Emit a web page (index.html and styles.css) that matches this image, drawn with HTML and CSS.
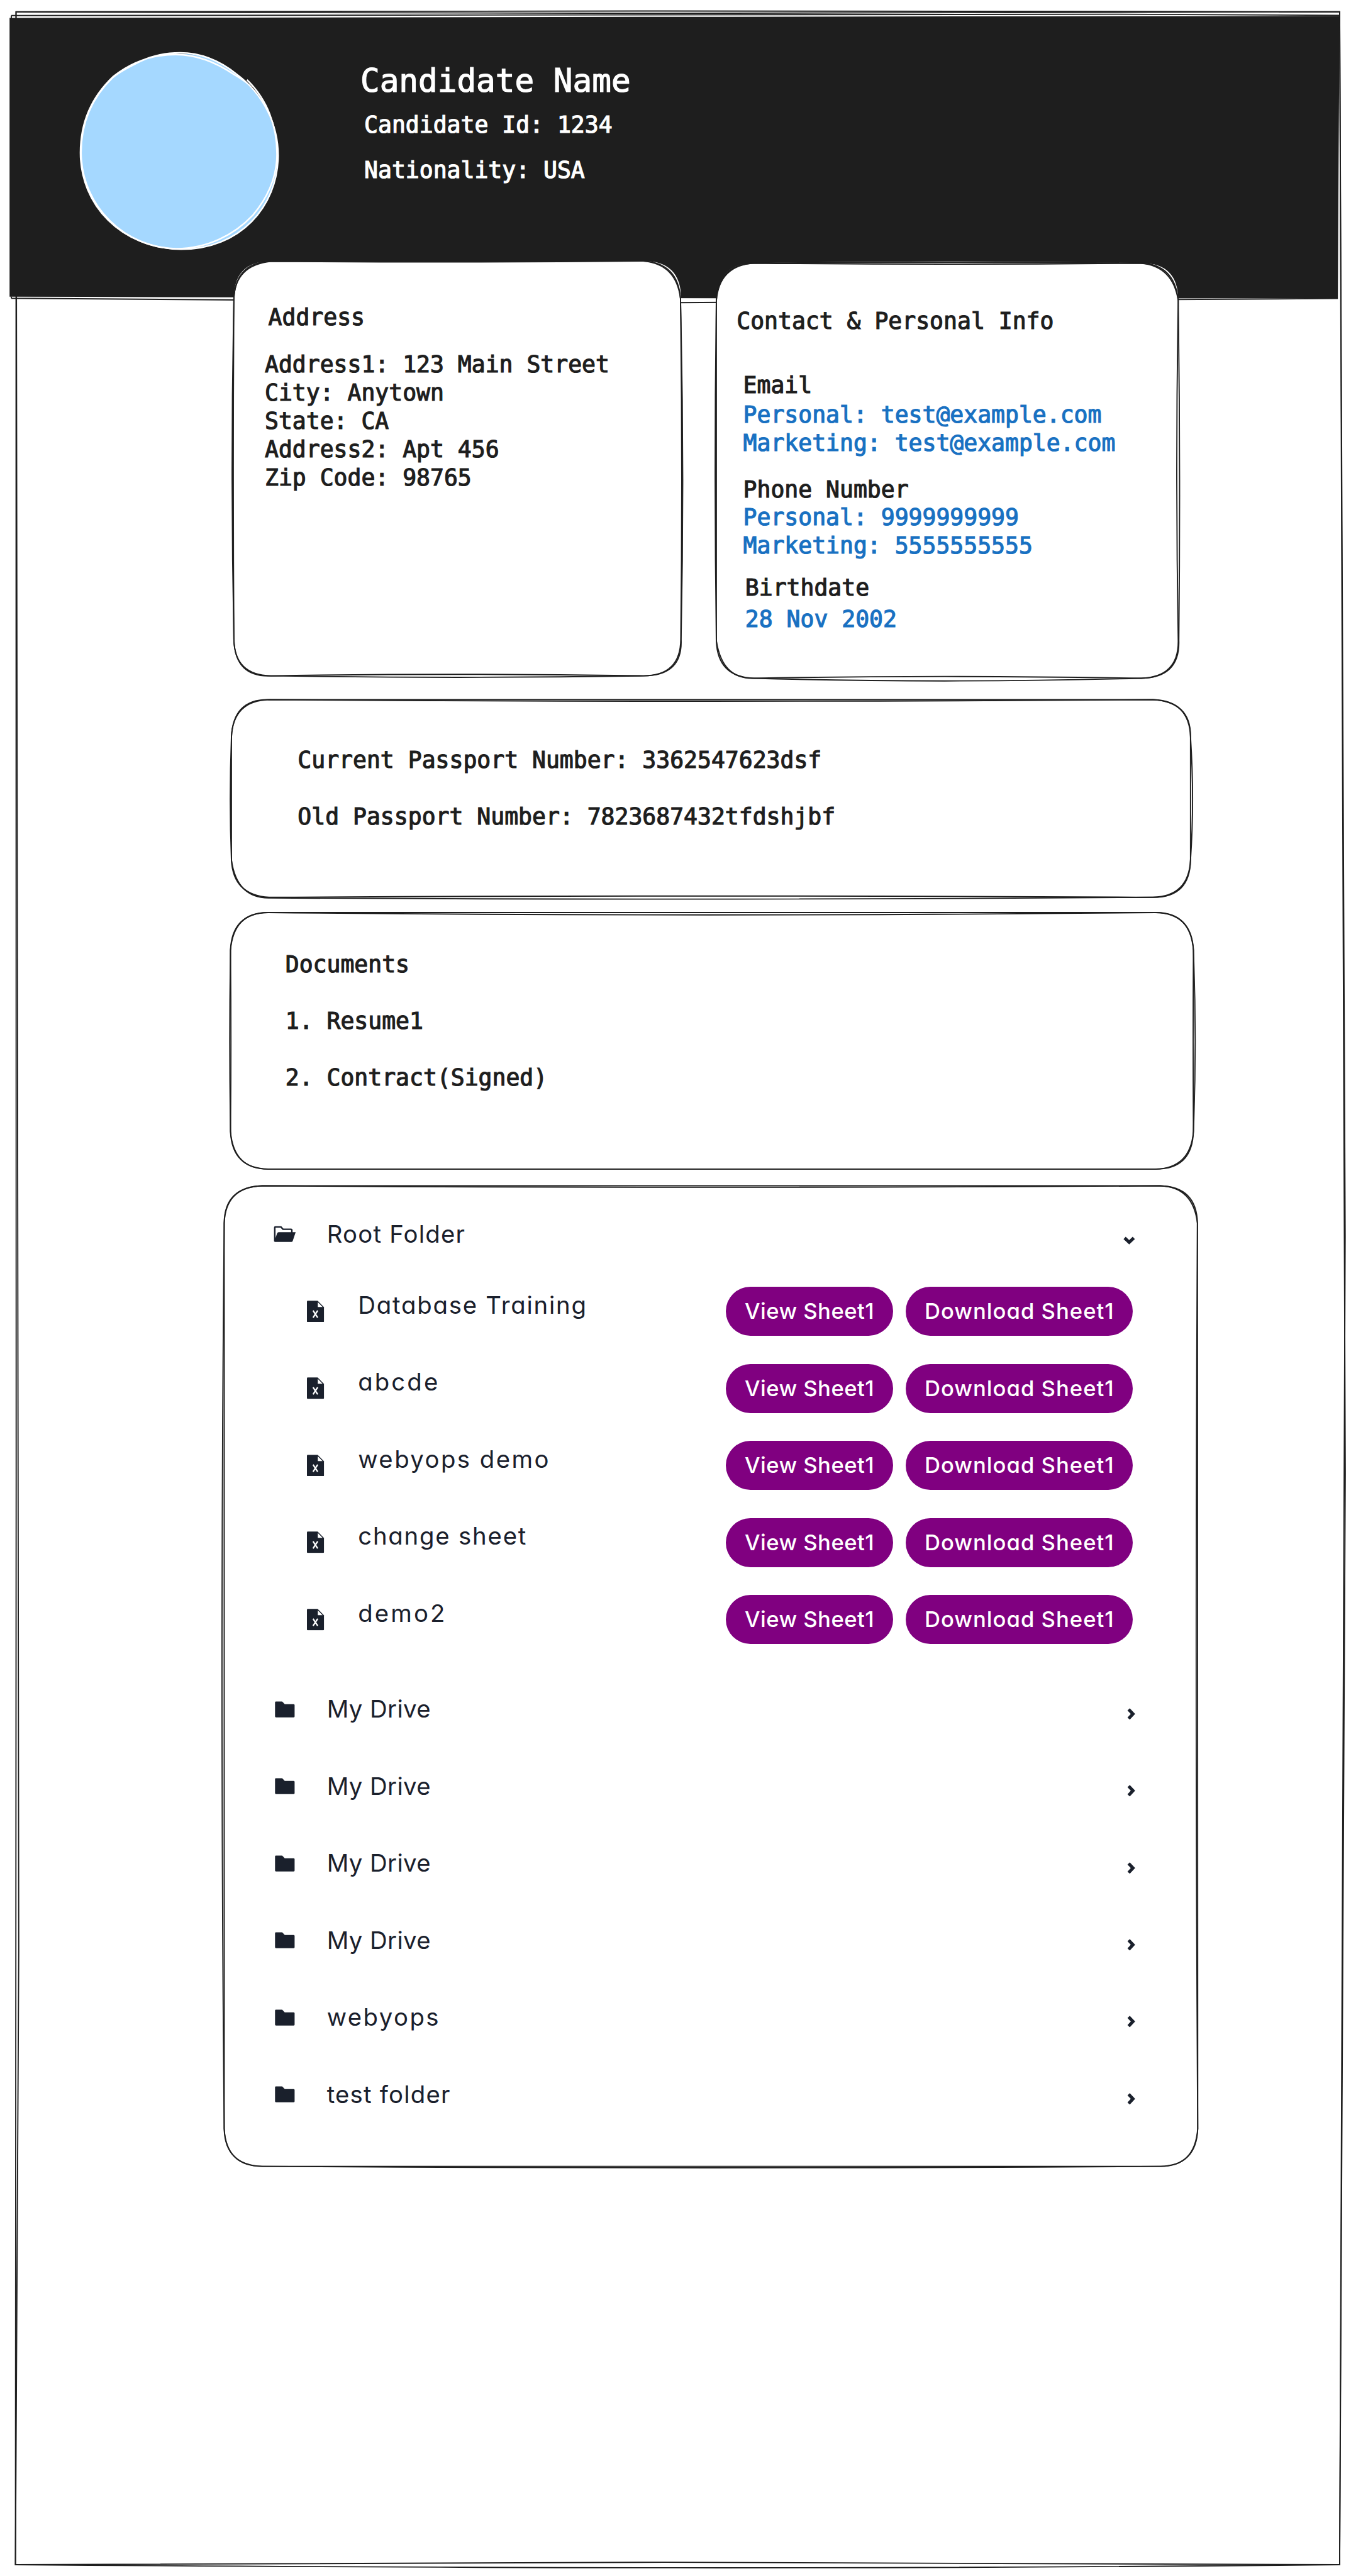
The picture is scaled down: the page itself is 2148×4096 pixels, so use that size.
FILE: index.html
```html
<!DOCTYPE html>
<html lang="en">
<head>
<meta charset="utf-8">
<title>Candidate Profile</title>
<link rel="stylesheet" href="styles.css">
</head>
<body>
<svg class="defs" aria-hidden="true">
  <symbol id="folder-open" viewBox="0 0 38 28">
    <path d="M2 26.5V3Q2 2 3 2H12.500L16 6H29.500Q31 6 31 7.500V12" fill="none" stroke="currentColor" stroke-width="2.600"/>
    <path d="M8.500 11H37.500L32.500 26Q32 27.500 30.500 27.500H2Q1 27.500 1.500 25.800L6 12.800Q6.800 11 8.500 11Z" fill="currentColor"/>
  </symbol>
  <symbol id="folder" viewBox="0 0 34 28">
    <path d="M2 .5H12.500L16.800 5H32Q33.700 5 33.700 6.700V26Q33.700 27.500 32 27.500H2Q.3 27.500 .3 26V2Q.3 .5 2 .5Z" fill="currentColor"/>
  </symbol>
  <symbol id="file" viewBox="0 0 30 37">
    <path d="M1.500 0H18.500L29.500 11V35.500Q29.500 37 28 37H1.500Q0 37 0 35.500V1.500Q0 0 1.500 0Z" fill="currentColor"/>
    <path d="M18.800 2.500V10.800H27Z" fill="#fff"/>
    <path d="M10.600 17L18.600 29.200M18.600 17L10.600 29.200" fill="none" stroke="#fff" stroke-width="2.500"/>
  </symbol>
  <symbol id="down" viewBox="0 0 20 14">
    <path d="M2.200 2.600L10 10L17.800 2.600" fill="none" stroke="currentColor" stroke-width="5.400"/>
  </symbol>
  <symbol id="right" viewBox="0 0 14 20">
    <path d="M2.600 2.200L10 10L2.600 17.800" fill="none" stroke="currentColor" stroke-width="5.400"/>
  </symbol>
</svg>
<div class="page">
  <svg class="sketch" viewBox="0 0 2296 4379" aria-hidden="true">
    <path class="ink" d="M26 20C800 19 1500 17.500 2277 20C2290 1500 2290 2900 2277 4360C1500 4368 800 4366 26 4360C28 2900 27 1500 27 20"/>
    <path class="ink" d="M26 20.500C800 27 1500 20 2277 20C2290 1400 2289 3000 2277 4360C1500 4354 800 4355 26 4360C35.500 3000 35.500 2000 27 20"/>
    <path class="banner" d="M16 30.500Q1100 28.500 2277 27Q2275 270 2274 507Q1200 508 16 504.500Z"/>
    <path class="ink" d="M19 26.500C700 22.500 1500 21.500 2277 26M19 26.500V32M19 507C500 512 800 514 1150 514.500C1600 513 2000 509 2274 507.500M19 504V507"/>
  </svg>

  <header class="header">
    <svg class="avatar" viewBox="136 89 339 337" aria-hidden="true">
      <path class="avatar-fill" d="M303 92C343 90 374 104 402 125C446 158 472 212 472 265C471 352 410 423 308 423C208 423 138 350 138 260C138 205 158 163 193 130C227 103 262 92 303 92Z"/>
      <path class="avatar-line" d="M240 104C262 94 283 90 306 90C345 90 376 105 402 126C448 160 473 212 473 265C472 352 408 424 308 424C205 422 137 348 137 260C137 205 158 163 193 130C226 104 262 93 299 93C338 93 370 108 398 127Q420 140 427 148"/>
      <path class="avatar-line" d="M240 104C222 113 203 122 191 133C157 166 138 208 138 260C139 352 214 422 300 423C352 423 398 400 430 366C456 335 471 300 471 262C471 215 455 170 420 136"/>
    </svg>
    <div class="identity">
      <h1>Candidate Name</h1>
      <p>Candidate Id: 1234</p>
      <p>Nationality: USA</p>
    </div>
  </header>

  <main class="content">
    <div class="top-cards">
      <section class="card address">
        <svg class="sketch" viewBox="395 445 762 705" aria-hidden="true">
          <path class="paper" d="M460 444.500Q780 446 1093 444Q1157 444 1157 508Q1160 800 1157 1087Q1157 1149 1093 1149Q780 1148 460 1149Q397 1149 397 1087Q394 800 397 508Q397 444 460 444.500Z"/>
          <path class="ink" d="M460 444.500Q780 447 1093 444Q1152 447 1156 508Q1160 800 1156.500 1087Q1156 1149 1093 1149Q780 1144 460 1149Q398 1148 397 1087Q391 800 397 508Q400 446 460 444.500"/>
          <path class="ink" d="M460 444.500Q780 445 1093 444Q1149 449 1156 508Q1163 800 1157 1087Q1160 1149 1093 1149Q780 1154 460 1149Q399 1152 397 1087Q395 800 397 508Q399 451 460 444.500"/>
        </svg>
        <h2>Address</h2>
        <p>Address1: 123 Main Street</p>
        <p>City: Anytown</p>
        <p>State: CA</p>
        <p>Address2: Apt 456</p>
        <p>Zip Code: 98765</p>
      </section>

      <section class="card contact">
        <svg class="sketch" viewBox="1216 447 786 707" aria-hidden="true">
          <path class="paper" d="M1281 447.500Q1600 441.500 1938 447.500Q2002 446 2002 511Q2000 800 2002 1089Q2002 1153 1939 1153Q1600 1152 1281 1153Q1217 1153 1217 1089V511Q1220 447 1281 447.500Z"/>
          <path class="ink" d="M1281 447.500Q1600 451 1938 447.500Q1996 449 2002 511Q1997 800 2002 1089Q2003 1151 1939 1153Q1600 1147 1281 1153Q1219 1151 1217 1089Q1213 800 1217 511Q1220 449 1281 447.500"/>
          <path class="ink" d="M1281 447.500Q1600 445 1938 447.500Q1993 452 2002 511Q2006 800 2003 1089Q2005 1152 1939 1153Q1600 1162 1281 1153Q1227 1155 1217 1089Q1217 800 1217 511Q1222 451 1281 447.500"/>
        </svg>
        <h2>Contact &amp; Personal Info</h2>
        <div class="group email">
          <h3>Email</h3>
          <p>Personal: test@example.com</p>
          <p>Marketing: test@example.com</p>
        </div>
        <div class="group phone">
          <h3>Phone Number</h3>
          <p>Personal: 9999999999</p>
          <p>Marketing: 5555555555</p>
        </div>
        <div class="group birth">
          <h3>Birthdate</h3>
          <p>28 Nov 2002</p>
        </div>
      </section>
    </div>

    <section class="card passport">
      <svg class="sketch" viewBox="392 1189 1632 337" aria-hidden="true">
        <path class="ink" d="M457 1189.500Q1200 1195 1959 1189.500Q2021 1191 2023 1253Q2023 1360 2023 1462Q2020 1524 1959 1525.500Q1200 1521 457 1525.500Q396 1522 393 1462Q389 1360 393 1253Q396 1191 457 1189.500Z"/>
        <path class="ink" d="M457 1189.500Q1200 1190 1959 1189.500Q2024 1193 2023 1253Q2030 1360 2023 1462Q2022 1526 1959 1525.500Q1200 1531 457 1526.500Q402 1527 393 1462Q393 1360 393 1253Q396 1188 457 1189.500Z"/>
      </svg>
      <p>Current Passport Number: 3362547623dsf</p>
      <p>Old Passport Number: 7823687432tfdshjbf</p>
    </section>

    <section class="card documents">
      <svg class="sketch" viewBox="391 1551 1637 436" aria-hidden="true">
        <path class="ink" d="M456 1551Q1200 1548.500 1963 1551Q2025 1552 2028 1615Q2027 1770 2028 1923Q2023 1986 1963 1987Q1200 1985 456 1987Q394 1986 391.500 1923Q389 1770 391.500 1615Q394 1552 456 1551Z"/>
        <path class="ink" d="M456 1551Q1200 1559 1963 1551Q2023 1550 2028 1615Q2034 1770 2028 1923Q2026 1988 1963 1987Q1200 1988 456 1987Q397 1988 391.500 1923Q393 1770 391.500 1615Q397 1550 456 1551Z"/>
      </svg>
      <h2>Documents</h2>
      <p>1. Resume1</p>
      <p>2. Contract(Signed)</p>
    </section>

    <section class="card folders">
      <svg class="sketch" viewBox="381 2016 1655 1666" aria-hidden="true">
        <path class="ink" d="M446 2015.500Q1200 2014 1972 2015.500Q2034 2017 2035.500 2079Q2031 2850 2036 3618Q2034 3681 1972 3682Q1200 3682 446 3682Q383 3680 381.500 3618Q374 2850 381.500 2079Q382 2018 446 2015.500Z"/>
        <path class="ink" d="M446 2015.500Q1200 2020.500 1972 2015.500Q2028 2017 2035.500 2079Q2039 2850 2036 3618Q2031 3683 1972 3682Q1200 3687 446 3682Q385 3682 381.500 3618Q383 2850 381.500 2079Q384 2017 446 2015.500Z"/>
      </svg>

      <div class="row root">
        <svg class="icon icon-open"><use href="#folder-open"/></svg>
        <span class="name">Root Folder</span>
        <svg class="chevron-down"><use href="#down"/></svg>
      </div>

      <ul class="files">
        <li><svg class="icon-file"><use href="#file"/></svg><span class="name">Database Training</span><button>View Sheet1</button><button class="download">Download Sheet1</button></li>
        <li><svg class="icon-file"><use href="#file"/></svg><span class="name loose">abcde</span><button>View Sheet1</button><button class="download">Download Sheet1</button></li>
        <li><svg class="icon-file"><use href="#file"/></svg><span class="name roomy">webyops demo</span><button>View Sheet1</button><button class="download">Download Sheet1</button></li>
        <li><svg class="icon-file"><use href="#file"/></svg><span class="name">change sheet</span><button>View Sheet1</button><button class="download">Download Sheet1</button></li>
        <li><svg class="icon-file"><use href="#file"/></svg><span class="name loose">demo2</span><button>View Sheet1</button><button class="download">Download Sheet1</button></li>
      </ul>

      <div class="drives">
        <div class="row"><svg class="icon"><use href="#folder"/></svg><span class="name tight">My Drive</span><svg class="chevron"><use href="#right"/></svg></div>
        <div class="row"><svg class="icon"><use href="#folder"/></svg><span class="name tight">My Drive</span><svg class="chevron"><use href="#right"/></svg></div>
        <div class="row"><svg class="icon"><use href="#folder"/></svg><span class="name tight">My Drive</span><svg class="chevron"><use href="#right"/></svg></div>
        <div class="row"><svg class="icon"><use href="#folder"/></svg><span class="name tight">My Drive</span><svg class="chevron"><use href="#right"/></svg></div>
        <div class="row"><svg class="icon"><use href="#folder"/></svg><span class="name roomy">webyops</span><svg class="chevron"><use href="#right"/></svg></div>
        <div class="row"><svg class="icon"><use href="#folder"/></svg><span class="name">test folder</span><svg class="chevron"><use href="#right"/></svg></div>
      </div>
    </section>
  </main>
</div>
</body>
</html>
```
FILE: styles.css
```css
/* 1rem = 10 drawing units; the drawing is 229.6 x 437.9 rem */
html { font-size: 9.3554px; }
* { box-sizing: border-box; margin: 0; padding: 0; }
body {
  background: #fff;
  color: #1e1e1e;
  font: 3.893rem/4.8rem "DejaVu Sans Mono", "Liberation Mono", monospace;
}
h1, h2, h3 { font-weight: 400; font-size: inherit; line-height: inherit; }
p, h1, h2, h3 { white-space: nowrap; -webkit-text-stroke: .13rem currentColor; }
.defs { position: absolute; width: 0; height: 0; }
.page { position: relative; width: 229.6rem; height: 437.8rem; overflow: hidden; }

/* hand-drawn outlines lie behind the content of their box */
.sketch { position: absolute; inset: 0; width: 100%; height: 100%; overflow: visible; z-index: -1; }
.ink { fill: none; stroke: #1e1e1e; stroke-width: 2; }
.paper { fill: #fff; }
.banner { fill: #1e1e1e; }

.page, .card { isolation: isolate; }

.header { display: flex; height: 44.5rem; padding: 8.9rem 0 0 13.6rem; color: #fff; }
.avatar { flex: none; width: 33.9rem; height: 33.7rem; overflow: visible; }
.avatar-fill { fill: #a5d8ff; }
.avatar-line { fill: none; stroke: #fff; stroke-width: 2.6; }
.identity { padding: 1.6rem 0 0 13.75rem; }
.identity h1 { font-size: 5.45rem; line-height: 6.7rem; margin-bottom: 1.71rem; }
.identity p { padding-left: .65rem; margin-bottom: 2.95rem; }

.content { padding-left: 38.1rem; }
.card { position: relative; }
.top-cards { display: flex; align-items: flex-start; gap: 5.9rem; padding-left: 1.4rem; }

.address { width: 76.2rem; height: 70.5rem; padding: 7.15rem 0 0 5.5rem; }
.address h2 { padding-left: .6rem; margin-bottom: 3.2rem; }

.contact { width: 78.6rem; height: 70.7rem; margin-top: .2rem; padding: 7.58rem 0 0 3.6rem; }
.contact h2 { margin-bottom: 6.11rem; }
.group { padding-left: 1.1rem; color: #1971c2; }
.group h3 { color: #1e1e1e; }
.email h3 { margin-bottom: .19rem; }
.phone { margin-top: 3.1rem; }
.phone h3 { line-height: 4.7rem; }
.birth { margin-top: 2.38rem; padding-left: 1.45rem; }
.birth h3 { margin-bottom: .53rem; }

.passport { width: 163.2rem; height: 33.7rem; margin: 3.5rem 0 0 1.1rem; padding: 7.95rem 0 0 11.4rem; }
.passport p + p { margin-top: 4.8rem; }

.documents { width: 163.7rem; height: 43.6rem; margin: 2.5rem 0 0 1rem; padding: 6.57rem 0 0 9.4rem; }
.documents p { margin-top: 4.8rem; }

.folders {
  width: 165.5rem; height: 166.6rem; margin-top: 2.9rem; padding: 5.17rem 10.7rem 0 8.4rem;
  color: #1a202c; font-family: Inter, "Open Sans", sans-serif; font-size: 4.1rem;
  font-feature-settings: "cv11";
}
.row { display: flex; align-items: center; height: 6rem; line-height: 5.9rem; }
.name { flex: 1; letter-spacing: .13rem; white-space: nowrap; }
.icon { flex: none; width: 3.4rem; height: 2.8rem; margin: 0 5.4rem 0 .25rem; }
.icon-open { width: 3.8rem; margin: 0 5.25rem 0 0; }
.chevron { width: 1.4rem; height: 2rem; margin-top: 1.5rem; }
.chevron-down { width: 2rem; height: 1.4rem; margin: 2.1rem 0 0; }

.files { list-style: none; display: grid; gap: 4.78rem; margin-top: 5.95rem; padding: 0 .35rem 0 5.7rem; }
.files li { display: flex; align-items: center; height: 8.32rem; }
.files .name { align-self: flex-start; line-height: 6rem; padding-top: .05rem; letter-spacing: .19rem; }
.files .loose { letter-spacing: .33rem; }
.name.roomy { letter-spacing: .26rem; }
.icon-file { flex: none; width: 2.95rem; height: 3.7rem; margin-right: 5.7rem; }
.files button {
  width: 28.5rem; height: 8.32rem; border: 0; border-radius: 4.16rem; background: #800080; color: #fff;
  font: 500 3.7rem/8.32rem Inter, "Open Sans", sans-serif; font-feature-settings: "cv11";
  letter-spacing: .05rem; white-space: nowrap;
}
.files .download { width: 38.6rem; margin-left: 2.13rem; letter-spacing: .11rem; }

.drives { display: grid; gap: 7.09rem; margin-top: 8.1rem; }
.drives .tight { letter-spacing: .04rem; }
```
